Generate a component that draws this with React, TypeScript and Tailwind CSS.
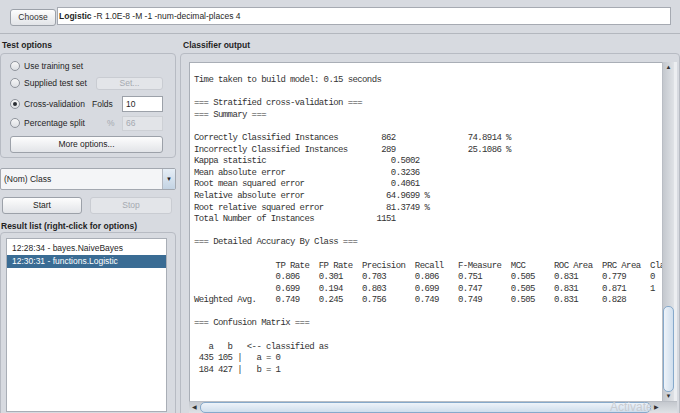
import React from "react";

// Place each string at a fixed character column, the way Weka pads its output
const at = (cols: [number, string][]): string => {
  let line = "";
  for (const [col, text] of cols) {
    line = line.padEnd(col, " ") + text;
  }
  return line;
};

const OUTPUT: string[] = [
  "Time taken to build model: 0.15 seconds",
  "",
  "=== Stratified cross-validation ===",
  "=== Summary ===",
  "",
  at([[0, "Correctly Classified Instances"], [39, "862"], [57, "74.8914 %"]]),
  at([[0, "Incorrectly Classified Instances"], [39, "289"], [57, "25.1086 %"]]),
  at([[0, "Kappa statistic"], [41, "0.5002"]]),
  at([[0, "Mean absolute error"], [41, "0.3236"]]),
  at([[0, "Root mean squared error"], [41, "0.4061"]]),
  at([[0, "Relative absolute error"], [40, "64.9699 %"]]),
  at([[0, "Root relative squared error"], [40, "81.3749 %"]]),
  at([[0, "Total Number of Instances"], [38, "1151"]]),
  "",
  "=== Detailed Accuracy By Class ===",
  "",
  at([[17, "TP Rate"], [26, "FP Rate"], [35, "Precision"], [46, "Recall"], [55, "F-Measure"], [66, "MCC"], [75, "ROC Area"], [85, "PRC Area"], [95, "Class"]]),
  at([[17, "0.806"], [26, "0.301"], [35, "0.703"], [46, "0.806"], [55, "0.751"], [66, "0.505"], [75, "0.831"], [85, "0.779"], [95, "0"]]),
  at([[17, "0.699"], [26, "0.194"], [35, "0.803"], [46, "0.699"], [55, "0.747"], [66, "0.505"], [75, "0.831"], [85, "0.871"], [95, "1"]]),
  at([[0, "Weighted Avg."], [17, "0.749"], [26, "0.245"], [35, "0.756"], [46, "0.749"], [55, "0.749"], [66, "0.505"], [75, "0.831"], [85, "0.828"]]),
  "",
  "=== Confusion Matrix ===",
  "",
  "   a   b   <-- classified as",
  " 435 105 |   a = 0",
  " 184 427 |   b = 1",
];

const btn =
  "flex items-center justify-center rounded-[3px] border border-[#9ca1a9] bg-gradient-to-b from-[#fdfdfd] to-[#e2e4e8] text-[#222]";
const btnOff =
  "flex items-center justify-center rounded-[3px] border border-[#c9ccd2] bg-[#e3e5e9] text-[#a5a9b0]";

function Radio({ checked, label }: { checked?: boolean; label: string }) {
  return (
    <div className="flex items-center gap-[4px]">
      <span className="flex h-[10px] w-[10px] items-center justify-center rounded-full border border-[#8f949c] bg-gradient-to-b from-[#f7f7f7] to-[#dcdfe3]">
        {checked && <span className="h-[4px] w-[4px] rounded-full bg-[#2a2d33]" />}
      </span>
      <span>{label}</span>
    </div>
  );
}

export default function App() {
  return (
    <div
      className="relative h-[413px] w-[680px] overflow-hidden bg-[#d7dae0] text-[8.5px] text-[#1f1f1f]"
      style={{ fontFamily: '"Liberation Sans", Arial, sans-serif' }}
    >
      {/* Classifier chooser */}
      <div className="flex h-[34px] items-start gap-[1px] border-b border-[#b3b7be] pl-[10px] pt-[7px]">
        <button className={`${btn} mt-[2px] h-[17px] w-[46px] text-[#333]`}>Choose</button>
        <div className="flex h-[18px] w-[614px] items-center border border-[#a6aab2] bg-white pl-[1px]">
          <span className="font-bold">Logistic</span>
          <span className="ml-[2px]">-R 1.0E-8 -M -1 -num-decimal-places 4</span>
        </div>
      </div>

      <div className="flex gap-[4px]">
        {/* Left column */}
        <div className="flex w-[176px] shrink-0 flex-col">
          <div className="flex h-[19px] items-end pl-[2px] pb-[1px] font-bold">Test options</div>
          <div className="flex h-[105px] flex-col rounded-[4px] border border-[#b7bbc3] pl-[9px] pr-[12px] pt-[5px]">
            <div className="flex h-[14px] items-center">
              <Radio label="Use training set" />
            </div>
            <div className="mt-[3px] flex h-[14px] items-center justify-between">
              <Radio label="Supplied test set" />
              <div className={`${btnOff} h-[13px] w-[67px]`}>Set...</div>
            </div>
            <div className="mt-[5px] flex h-[18px] items-center">
              <div className="flex-1">
                <Radio checked label="Cross-validation" />
              </div>
              <span className="w-[30px]">Folds</span>
              <div className="flex h-[16px] w-[41px] items-center border border-[#9ca1a9] bg-white pl-[3px]">10</div>
            </div>
            <div className="mt-[2px] flex h-[16px] items-center">
              <div className="flex-1">
                <Radio label="Percentage split" />
              </div>
              <span className="w-[30px] pl-[15px] text-[#a5a9b0]">%</span>
              <div className="flex h-[15px] w-[41px] items-center border border-[#cdd0d5] bg-[#e2e4e8] pl-[3px] text-[#a5a9b0]">66</div>
            </div>
            <button className={`${btn} mt-[5px] h-[17px] w-[153px]`}>More options...</button>
          </div>

          {/* Class selector */}
          <div className="mt-[10px] flex h-[22px] items-center rounded-[2px] border border-[#a3a8b0] bg-[#f4f5f7]">
            <span className="flex-1 pl-[3px]">(Nom) Class</span>
            <span className="flex h-full w-[13px] items-center justify-center border-l border-[#b3b8c0] bg-gradient-to-b from-[#e6eef6] to-[#c3d3e3] text-[6px] text-[#222]">
              ▼
            </span>
          </div>

          <div className="mt-[7px] flex gap-[8px] pl-[2px]">
            <button className={`${btn} h-[17px] w-[80px]`}>Start</button>
            <div className={`${btnOff} h-[17px] w-[82px]`}>Stop</div>
          </div>

          <div className="flex h-[18px] items-center pl-[1px] pt-[6px] font-bold">Result list (right-click for options)</div>
          <div className="h-[185px] rounded-[4px] border border-[#b7bbc3] pl-[5px] pr-[8px] pt-[5px]">
            <div className="h-[174px] border border-[#a9aeb6] bg-white pt-[3px]">
              <div className="flex h-[13px] items-center pl-[5px]">12:28:34 - bayes.NaiveBayes</div>
              <div className="flex h-[13px] items-center bg-[#3a6c94] pl-[5px] text-white">12:30:31 - functions.Logistic</div>
            </div>
          </div>
        </div>

        {/* Classifier output */}
        <div className="flex min-w-0 flex-1 flex-col">
          <div className="flex h-[19px] items-end pl-[3px] pb-[1px] font-bold">Classifier output</div>
          <div className="flex h-[370px] flex-col rounded-[4px] border border-[#b7bbc3] pl-[8px] pr-[2px] pt-[8px]">
            <div className="flex h-[339px] min-w-0">
              <div className="min-w-0 flex-1 overflow-hidden border-l border-t border-[#a9aeb6] bg-white pl-[4px] pt-[12px]">
                <pre
                  className="text-[9px] leading-[11.6px] tracking-[-0.6px] text-[#333]"
                  style={{ fontFamily: '"Liberation Mono", "Courier New", monospace' }}
                >
                  {OUTPUT.join("\n")}
                </pre>
              </div>
              {/* Vertical scrollbar */}
              <div className="flex w-[12px] shrink-0 flex-col border-l border-[#b9bdc4] bg-gradient-to-r from-[#c4c8ce] to-[#dfe2e6]">
                <div className="flex h-[11px] items-center justify-center text-[6px] text-[#333]">▲</div>
                <div className="flex-1" />
                <div className="h-[86px] rounded-[5px] border border-[#86a9cb] bg-gradient-to-r from-[#eef3f9] to-[#cfdeed]" />
                <div className="flex h-[9px] items-center justify-center text-[6px] text-[#333]">▼</div>
              </div>
              <div className="w-[3px] shrink-0 bg-[#eceef1]" />
            </div>
            {/* Horizontal scrollbar */}
            <div className="flex h-[12px] border-t border-[#b9bdc4] bg-gradient-to-b from-[#c4c8ce] to-[#dfe2e6] pr-[15px]">
              <div className="flex w-[11px] items-center justify-center text-[6px] text-[#333]">◀</div>
              <div className="flex-1 rounded-[5px] border border-[#86a9cb] bg-gradient-to-b from-[#eef3f9] to-[#cfdeed]" />
              <div className="flex w-[11px] items-center justify-center text-[6px] text-[#333]">▶</div>
            </div>
          </div>
        </div>
      </div>

      <div className="pointer-events-none absolute left-[610px] top-[400px] text-[12px] leading-[14px] text-[#c9ccd1]">Activate Windows</div>
    </div>
  );
}
